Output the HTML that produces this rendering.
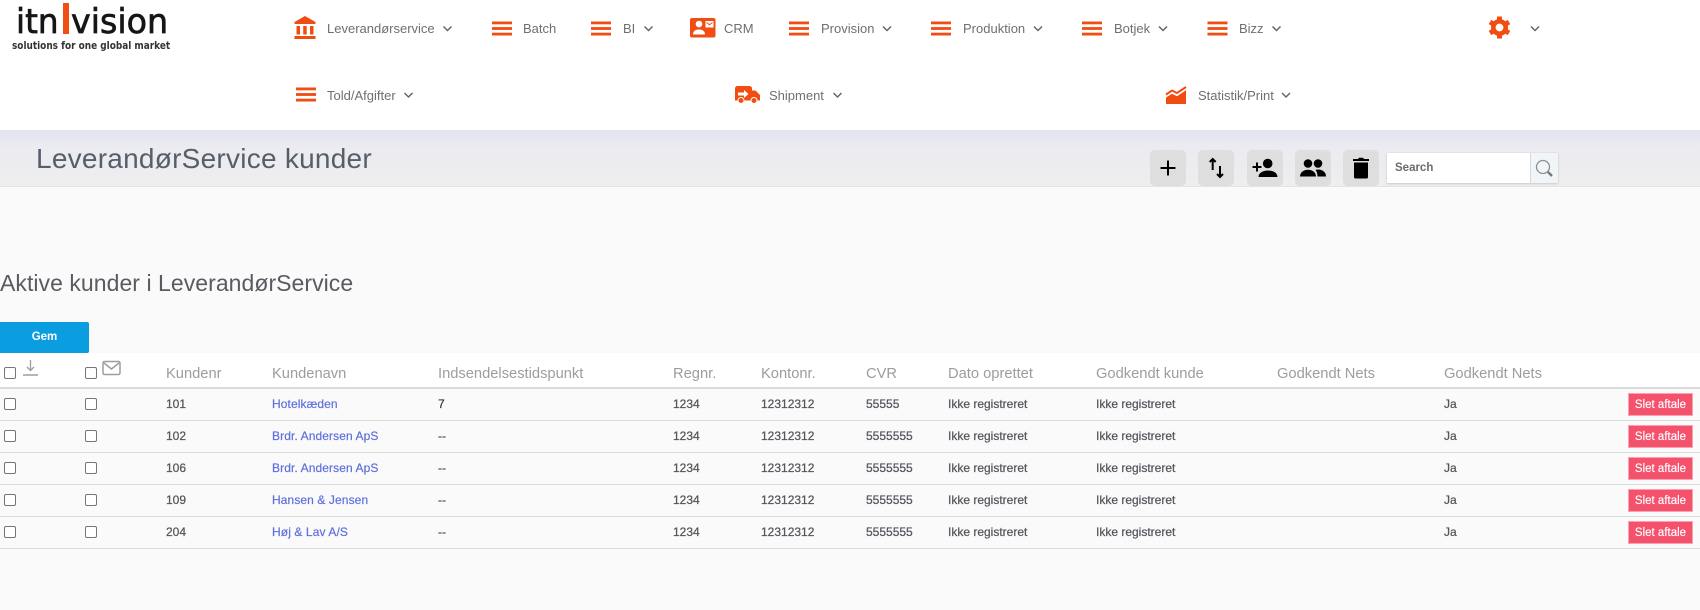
<!DOCTYPE html>
<html lang="da"><head><meta charset="utf-8"><title>LeverandørService kunder</title>
<style>
*{box-sizing:border-box}
html,body{margin:0;padding:0;width:1700px;height:610px;overflow:hidden;background:#fafafa;font-family:"Liberation Sans",sans-serif}
.a{position:absolute;white-space:nowrap}
#hd{left:0;top:0;width:1700px;height:130px;background:#fff}
#sub{left:0;top:130px;width:1700px;height:57px;background:linear-gradient(#e3e3f0,#ebebf1 30%,#eeeeee);border-bottom:1px solid #e4e4e4}
.n{font-size:13px;color:#6f6f6f;line-height:16px;height:16px}
.ic{position:absolute;overflow:visible}
.btn{position:absolute;top:150px;width:36px;height:36px;background:#dedede;border-radius:5px}
.th{font-size:14.7px;color:#9d9d9d;top:365px;line-height:18px}
.td{font-size:12px;color:#55565d;line-height:14px;font-weight:400;-webkit-text-stroke:.25px #55565d}
.lk{color:#5f6fdd;-webkit-text-stroke:.2px #5f6fdd;letter-spacing:.1px}
.ln{position:absolute;left:0;width:1700px;height:1px;background:#dcdcdc}
.cb{position:absolute;width:12px;height:12px;border:1px solid #767676;border-radius:2px;background:#fff}
.del{position:absolute;left:1628px;width:65px;height:23px;background:#f4516c;color:#fff;font-size:11.5px;line-height:22px;text-align:center;border:1px solid #f9a3b2;-webkit-text-stroke:.15px #fff}
</style></head><body>
<div class="a" id="hd"></div>
<div class="a" id="sub"></div>

<!-- logo -->
<div class="a" style="left:16px;top:2px;font:400 34px/40px 'DejaVu Sans',sans-serif;color:#161616;-webkit-text-stroke:.7px #161616;transform-origin:0 0;transform:scale(.96,1)">itn</div>
<div class="a" style="left:63px;top:3px;width:6px;height:31px;background:#f04e14"></div>
<div class="a" style="left:71px;top:2px;font:400 34px/40px 'DejaVu Sans',sans-serif;color:#161616;-webkit-text-stroke:.7px #161616;transform-origin:0 0;transform:scale(.98,1)">vision</div>
<div class="a" style="left:12px;top:39px;font:700 10.5px/14px 'DejaVu Sans',sans-serif;color:#333;transform-origin:0 0;transform:scale(.85,1)">solutions for one global market</div>

<!-- nav icons -->
<svg class="ic" style="left:0;top:0" width="1700" height="130" fill="#f14d12">
<defs>
<g id="h"><rect x="0" y="0" width="20" height="2.8"/><rect x="0" y="5.600" width="20" height="2.800"/><rect x="0" y="11.200" width="20" height="2.800"/></g>
<path id="c" d="M0 0l4 4 4-4" fill="none" stroke="#666" stroke-width="1.5"/>
</defs>
<path d="M305 16l10.500 6v2h-21v-2z"/><rect x="296.500" y="26" width="3.500" height="8.500"/><rect x="303.200" y="26" width="3.500" height="8.500"/><rect x="310" y="26" width="3.500" height="8.500"/><rect x="294.500" y="36" width="21" height="3"/>
<use href="#h" x="492" y="21.500"/><use href="#h" x="591" y="21.500"/><use href="#h" x="789" y="21.500"/><use href="#h" x="931" y="21.500"/><use href="#h" x="1082" y="21.500"/><use href="#h" x="1207.500" y="21.500"/><use href="#h" x="296" y="87.500"/>
<rect x="690" y="18" width="25.500" height="19.500" rx="2"/>
<circle cx="699" cy="24" r="3.300" fill="#fff"/><path d="M693 34.500c0-3.500 2.500-5 6-5s6 1.500 6 5z" fill="#fff"/><rect x="705.500" y="21" width="8" height="6.500" fill="#fff"/><path d="M706.500 22.500l3 2.300 3-2.300" fill="none" stroke="#f14d12"/>
<path d="M735 88.500a2.500 2.500 0 0 1 2.500-2.500h12a2.500 2.500 0 0 1 2.500 2.500v2h3.500l4.500 4.500v5.500h-25z"/><circle cx="741" cy="100.500" r="3" stroke="#fff"/><circle cx="754" cy="100.500" r="3" stroke="#fff"/>
<path d="M738 92.500h6v-2.500l4.500 4-4.500 4v-2.500h-6z" fill="#fff"/>
<path d="M1166 94.500l6-4 5 2.500 9-6" fill="none" stroke="#f14d12" stroke-width="2"/>
<path d="M1166 104v-6.500l6-3.800 5 2.500 9-6v13.800z"/>
<g transform="translate(1499.500 27.500)"><circle r="6.200" fill="none" stroke="#f14d12" stroke-width="4.600"/><g id="t"><rect x="-2.500" y="-11" width="5" height="4"/><rect x="-2.500" y="7" width="5" height="4"/></g><use href="#t" transform="rotate(60)"/><use href="#t" transform="rotate(120)"/></g>
<use href="#c" x="443.500" y="26.500"/><use href="#c" x="644.500" y="26.500"/><use href="#c" x="883" y="26.500"/><use href="#c" x="1034" y="26.500"/><use href="#c" x="1159" y="26.500"/><use href="#c" x="1272.500" y="26.500"/><use href="#c" x="1531" y="26.500"/><use href="#c" x="404.500" y="93"/><use href="#c" x="833.500" y="93"/><use href="#c" x="1282" y="93"/>
</svg>

<!-- nav text -->
<div class="a n" style="left:327px;top:21px">Leverandørservice</div>
<div class="a n" style="left:523px;top:21px">Batch</div>
<div class="a n" style="left:623px;top:21px">BI</div>
<div class="a n" style="left:724px;top:21px">CRM</div>
<div class="a n" style="left:821px;top:21px">Provision</div>
<div class="a n" style="left:963px;top:21px">Produktion</div>
<div class="a n" style="left:1114px;top:21px">Botjek</div>
<div class="a n" style="left:1239px;top:21px">Bizz</div>
<div class="a n" style="left:327px;top:88px">Told/Afgifter</div>
<div class="a n" style="left:769px;top:88px">Shipment</div>
<div class="a n" style="left:1198px;top:88px">Statistik/Print</div>

<!-- sub header -->
<div class="a" style="left:36px;top:142px;font-size:28px;line-height:34px;color:#575e6b;letter-spacing:.25px">LeverandørService kunder</div>
<div class="btn" style="left:1150px"><svg width="36" height="36" fill="none" stroke="#000" stroke-width="2"><path d="M18 10.500v15M10.500 18h15"/></svg></div>
<div class="btn" style="left:1198px"><svg width="36" height="36" fill="none" stroke="#000" stroke-width="2"><path d="M14.700 20V9M11.700 12L14.700 9l3 3M22 16v11M19 24L22 27l3-3"/></svg></div>
<div class="btn" style="left:1247px"><svg width="36" height="36" fill="#000"><circle cx="20.700" cy="13.500" r="4.800"/><path d="M11.500 27c0-4.500 5-6.500 9.500-6.500s9.500 2 9.500 6.500z"/><path d="M5.500 17h9M10 12.500v9" stroke="#000" stroke-width="2" fill="none"/></svg></div>
<div class="btn" style="left:1295px"><svg width="36" height="36" fill="#000"><circle cx="13" cy="13.500" r="4.300"/><circle cx="23" cy="13.500" r="4.300"/><path d="M5 26.500c0-4.500 4-6.800 8-6.800s8 2.300 8 6.800z"/><path d="M20.500 19.800c1-.2 1.800-.3 2.500-.3 4 0 8 2.300 8 7h-8.500c0-2.700-.8-5-2-6.700z"/></svg></div>
<div class="btn" style="left:1343px"><svg width="36" height="36" fill="#000"><path d="M11 12.500h14V27a1.500 1.500 0 0 1-1.500 1.500h-11A1.500 1.500 0 0 1 11 27z"/><path d="M10 9h5l1-1.200h4L21 9h5v2H10z"/></svg></div>

<div class="a" style="left:1387px;top:153px;width:171px;height:30px;background:#fff;box-shadow:0 1px 2px #ccc,0 0 1px #ccc"></div>
<div class="a" style="left:1530px;top:153px;width:28px;height:30px;background:#f1f5f8;border-left:1px solid #d5d9dd"></div>
<div class="a" style="left:1395px;top:161px;font-size:11.5px;font-weight:700;color:#6c6c6c;line-height:14px">Search</div>
<svg class="ic" style="left:1530px;top:153px" width="28" height="30" fill="none" stroke="#8a8f92"><circle cx="13" cy="14" r="6.500" stroke-width="1.300"/><path d="M18 19l4 4" stroke-width="2.400" stroke="#777"/></svg>

<div class="a" style="left:0;top:267px;font-size:23px;line-height:32px;color:#5a5b61;letter-spacing:.05px">Aktive kunder i LeverandørService</div>

<div class="a" style="left:0;top:322px;width:89px;height:31px;background:#0a9ee0;border-radius:0 2px 2px 0;color:#fff;font-size:11.5px;font-weight:700;text-align:center;line-height:30px">Gem</div>

<!-- table -->
<div class="a" style="left:0;top:353px;width:1700px;height:35px;background:#fff"></div>
<div class="a" style="left:0;top:387px;width:1700px;height:2px;background:#dcdcdc"></div>
<div class="cb" style="left:3.500px;top:367px"></div>
<div class="cb" style="left:85px;top:367px"></div>
<svg class="ic" style="left:22px;top:359px" width="18" height="18" fill="none" stroke="#9d9d9d" stroke-width="1.300"><path d="M8.500 1v10M5 8l3.500 3.500L12 8"/><path d="M1 16h15" stroke-width="1.500"/></svg>
<svg class="ic" style="left:102px;top:360px" width="20" height="16" fill="none" stroke="#9d9d9d" stroke-width="1.500"><rect x="1" y="1.500" width="17" height="13" rx="1.500"/><path d="M2 3l7.500 6L17 3"/></svg>

<div class="a th" style="left:166px">Kundenr</div>
<div class="a th" style="left:272px">Kundenavn</div>
<div class="a th" style="left:438px">Indsendelsestidspunkt</div>
<div class="a th" style="left:673px">Regnr.</div>
<div class="a th" style="left:761px">Kontonr.</div>
<div class="a th" style="left:866px">CVR</div>
<div class="a th" style="left:948px">Dato oprettet</div>
<div class="a th" style="left:1096px">Godkendt kunde</div>
<div class="a th" style="left:1277px">Godkendt Nets</div>
<div class="a th" style="left:1444px">Godkendt Nets</div>

<div class="ln" style="top:420px"></div><div class="ln" style="top:452px"></div><div class="ln" style="top:484px"></div><div class="ln" style="top:516px"></div><div class="ln" style="top:548px"></div>

<!-- row 1 -->
<div class="cb" style="left:3.500px;top:398px"></div><div class="cb" style="left:85px;top:398px"></div>
<div class="a td" style="left:166px;top:397px">101</div><div class="a td lk" style="left:272px;top:397px">Hotelkæden</div><div class="a td" style="left:438px;top:397px;color:#222">7</div><div class="a td" style="left:673px;top:397px">1234</div><div class="a td" style="left:761px;top:397px">12312312</div><div class="a td" style="left:866px;top:397px">55555</div><div class="a td" style="left:948px;top:397px">Ikke registreret</div><div class="a td" style="left:1096px;top:397px">Ikke registreret</div><div class="a td" style="left:1444px;top:397px">Ja</div><div class="del" style="top:393px">Slet aftale</div>
<!-- row 2 -->
<div class="cb" style="left:3.500px;top:430px"></div><div class="cb" style="left:85px;top:430px"></div>
<div class="a td" style="left:166px;top:429px">102</div><div class="a td lk" style="left:272px;top:429px">Brdr. Andersen ApS</div><div class="a td" style="left:438px;top:429px">--</div><div class="a td" style="left:673px;top:429px">1234</div><div class="a td" style="left:761px;top:429px">12312312</div><div class="a td" style="left:866px;top:429px">5555555</div><div class="a td" style="left:948px;top:429px">Ikke registreret</div><div class="a td" style="left:1096px;top:429px">Ikke registreret</div><div class="a td" style="left:1444px;top:429px">Ja</div><div class="del" style="top:425px">Slet aftale</div>
<!-- row 3 -->
<div class="cb" style="left:3.500px;top:462px"></div><div class="cb" style="left:85px;top:462px"></div>
<div class="a td" style="left:166px;top:461px">106</div><div class="a td lk" style="left:272px;top:461px">Brdr. Andersen ApS</div><div class="a td" style="left:438px;top:461px">--</div><div class="a td" style="left:673px;top:461px">1234</div><div class="a td" style="left:761px;top:461px">12312312</div><div class="a td" style="left:866px;top:461px">5555555</div><div class="a td" style="left:948px;top:461px">Ikke registreret</div><div class="a td" style="left:1096px;top:461px">Ikke registreret</div><div class="a td" style="left:1444px;top:461px">Ja</div><div class="del" style="top:457px">Slet aftale</div>
<!-- row 4 -->
<div class="cb" style="left:3.500px;top:494px"></div><div class="cb" style="left:85px;top:494px"></div>
<div class="a td" style="left:166px;top:493px">109</div><div class="a td lk" style="left:272px;top:493px">Hansen &amp; Jensen</div><div class="a td" style="left:438px;top:493px">--</div><div class="a td" style="left:673px;top:493px">1234</div><div class="a td" style="left:761px;top:493px">12312312</div><div class="a td" style="left:866px;top:493px">5555555</div><div class="a td" style="left:948px;top:493px">Ikke registreret</div><div class="a td" style="left:1096px;top:493px">Ikke registreret</div><div class="a td" style="left:1444px;top:493px">Ja</div><div class="del" style="top:489px">Slet aftale</div>
<!-- row 5 -->
<div class="cb" style="left:3.500px;top:526px"></div><div class="cb" style="left:85px;top:526px"></div>
<div class="a td" style="left:166px;top:525px">204</div><div class="a td lk" style="left:272px;top:525px">Høj &amp; Lav A/S</div><div class="a td" style="left:438px;top:525px">--</div><div class="a td" style="left:673px;top:525px">1234</div><div class="a td" style="left:761px;top:525px">12312312</div><div class="a td" style="left:866px;top:525px">5555555</div><div class="a td" style="left:948px;top:525px">Ikke registreret</div><div class="a td" style="left:1096px;top:525px">Ikke registreret</div><div class="a td" style="left:1444px;top:525px">Ja</div><div class="del" style="top:521px">Slet aftale</div>
</body></html>
